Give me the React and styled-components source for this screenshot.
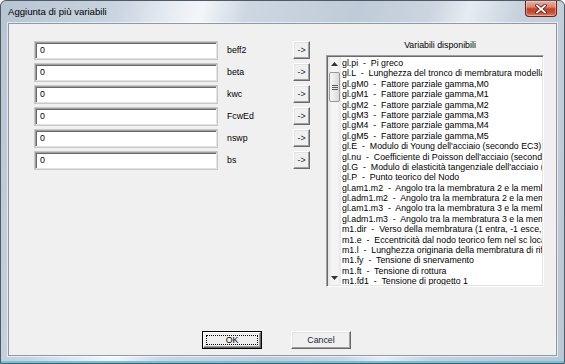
import React from "react";
import styled, { createGlobalStyle } from "styled-components";

const GlobalStyle = createGlobalStyle`
    html, body {
        margin: 0;
        padding: 0;
        overflow: hidden;
        background: #ffffff;
    }
    * {
        box-sizing: border-box;
    }
`

const Window = styled.div`
    width: 565px;
    height: 364px;
    display: flex;
    flex-direction: column;
    padding: 0 7px 7px 7px;
    border: 1px solid #4f5a66;
    border-radius: 6px 6px 0 0;
    background: linear-gradient(104deg, #b7c4d2 0%, #c9d4e0 18%, #e9eef4 27%, #f3f6f9 31%, #cdd7e2 38%, #bfcbd8 55%, #cbd5e0 66%, #e6ecf2 72%, #c6d1dc 80%, #bac7d4 100%);
    box-shadow: inset 0 -2px 0 #6fc3dc;
    font-family: "Liberation Sans", Arial, sans-serif;
`

const TitleBar = styled.div`
    height: 22px;
    flex: none;
    display: flex;
    flex-direction: row;
    justify-content: space-between;
    align-items: flex-start;
`

const Title = styled.div`
    padding-top: 5px;
    font-size: 9.6px;
    line-height: 12px;
    color: #000000;
`

const CloseButton = styled.div`
    width: 32px;
    height: 16px;
    display: flex;
    justify-content: center;
    align-items: center;
    border: 1px solid #6d2418;
    border-top: none;
    border-radius: 0 0 4px 4px;
    background: linear-gradient(180deg, #eab0a3 0%, #dc8574 40%, #c4432b 52%, #c84a33 75%, #de806a 100%);
    box-shadow: inset 0 0 0 1px rgba(255, 220, 210, 0.45);
`

const Client = styled.div`
    flex: 1;
    display: flex;
    flex-direction: column;
    padding: 14px 0 6px 0;
    background: #f0f0f0;
    border: 1px solid #8e99a6;
    box-shadow: 0 0 0 1px rgba(255, 255, 255, 0.6);
`

const Main = styled.div`
    display: flex;
    flex-direction: row;
    align-items: flex-start;
    padding-left: 26px;
`

const LeftColumn = styled.div`
    width: 275px;
    display: flex;
    flex-direction: column;
    gap: 4px;
    padding-top: 3px;
`

const Row = styled.div`
    height: 18px;
    display: flex;
    flex-direction: row;
    align-items: center;
`

const TextBox = styled.div`
    width: 182px;
    height: 17px;
    padding: 0 4px;
    display: flex;
    align-items: center;
    background: #ffffff;
    border: 1px solid;
    border-color: #a0a0a0 #e3e3e3 #e3e3e3 #a0a0a0;
    box-shadow: inset 1px 1px 0 #696969, 0 0 0 1px #c8c8c8;
    font-size: 8.8px;
    color: #000000;
`

const VarLabel = styled.div`
    width: 76px;
    padding-left: 10px;
    font-size: 8.8px;
    color: #000000;
`

const RaisedButton = styled.div`
    width: ${(p) => p.$w}px;
    height: 18px;
    display: flex;
    justify-content: center;
    align-items: center;
    background: #f0f0f0;
    border: 1px solid;
    border-color: #ffffff #696969 #696969 #ffffff;
    box-shadow: inset -1px -1px 0 #a0a0a0, inset 1px 1px 0 #e3e3e3;
    font-size: 8.8px;
    color: #1c1c30;
`

const DefaultButton = styled.div`
    width: 60px;
    height: 18px;
    border: 1px solid #000000;
`

const DefaultInner = styled.div`
    height: 100%;
    display: flex;
    justify-content: center;
    align-items: center;
    padding: 2px;
    background: #f0f0f0;
    border: 1px solid;
    border-color: #ffffff #696969 #696969 #ffffff;
    box-shadow: inset -1px -1px 0 #a0a0a0;
`

const FocusRect = styled.div`
    width: 100%;
    height: 100%;
    display: flex;
    justify-content: center;
    align-items: center;
    border: 1px dotted #000000;
    font-size: 8.8px;
    color: #000000;
`

const RightColumn = styled.div`
    display: flex;
    flex-direction: column;
    margin-left: 16px;
`

const ListTitle = styled.div`
    height: 14px;
    margin-bottom: 3px;
    padding-left: 10px;
    text-align: center;
    font-size: 8.8px;
    line-height: 14px;
    color: #000000;
`

const ListBox = styled.div`
    width: 218px;
    height: 232px;
    display: flex;
    flex-direction: row;
    background: #ffffff;
    border: 1px solid;
    border-color: #a0a0a0 #ffffff #ffffff #a0a0a0;
    box-shadow: inset 1px 1px 0 #696969, inset -1px -1px 0 #e3e3e3;
    padding: 1px;
    overflow: hidden;
`

const ScrollBar = styled.div`
    width: 13px;
    flex: none;
    display: flex;
    flex-direction: column;
    background: linear-gradient(90deg, #e4e4e4 0%, #f4f4f4 30%, #f4f4f4 70%, #e8e8e8 100%);
`

const ArrowBox = styled.div`
    height: 14px;
    display: flex;
    justify-content: center;
    align-items: center;
`

const Thumb = styled.div`
    height: 30px;
    margin: 1px 1px 0 1px;
    display: flex;
    flex-direction: column;
    justify-content: center;
    align-items: center;
    gap: 1px;
    border: 1px solid #979797;
    border-radius: 2px;
    background: linear-gradient(90deg, #f5f5f5 0%, #e9e9e9 50%, #d9d9d9 100%);
`

const Grip = styled.div`
    width: 6px;
    height: 1px;
    background: #5a5a5a;
`

const Track = styled.div`
    flex: 1;
`

const Items = styled.div`
    flex: 1;
    overflow: hidden;
    padding-top: 1px;
    padding-left: 1px;
`

const Item = styled.div`
    height: 10.4px;
    line-height: 10.4px;
    font-size: 8.8px;
    white-space: pre;
    color: #000000;
`

const Footer = styled.div`
    margin-top: auto;
    display: flex;
    flex-direction: row;
    gap: 29px;
    padding-left: 193px;
`

const variables = ["beff2", "beta", "kwc", "FcwEd", "nswp", "bs"];

const items = [
    "gl.pi  -  Pi greco",
    "gl.L  -  Lunghezza del tronco di membratura modellato",
    "gl.gM0  -  Fattore parziale gamma,M0",
    "gl.gM1  -  Fattore parziale gamma,M1",
    "gl.gM2  -  Fattore parziale gamma,M2",
    "gl.gM3  -  Fattore parziale gamma,M3",
    "gl.gM4  -  Fattore parziale gamma,M4",
    "gl.gM5  -  Fattore parziale gamma,M5",
    "gl.E  -  Modulo di Young dell'acciaio (secondo EC3)",
    "gl.nu  -  Coefficiente di Poisson dell'acciaio (secondo EC3)",
    "gl.G  -  Modulo di elasticità tangenziale dell'acciaio (secondo EC3)",
    "gl.P  -  Punto teorico del Nodo",
    "gl.am1.m2  -  Angolo tra la membratura 2 e la membratura 1",
    "gl.adm1.m2  -  Angolo tra la membratura 2 e la membratura 1",
    "gl.am1.m3  -  Angolo tra la membratura 3 e la membratura 1",
    "gl.adm1.m3  -  Angolo tra la membratura 3 e la membratura 1",
    "m1.dir  -  Verso della membratura (1 entra, -1 esce, rispetto al nodo)",
    "m1.e  -  Eccentricità dal nodo teorico fem nel sc locale",
    "m1.l  -  Lunghezza originaria della membratura di riferimento",
    "m1.fy  -  Tensione di snervamento",
    "m1.ft  -  Tensione di rottura",
    "m1.fd1  -  Tensione di progetto 1",
];

const CloseIcon = () => (
    <svg width="12" height="10" viewBox="0 0 12 10">
        <path d="M2 1.5 L10 8.5 M10 1.5 L2 8.5" stroke="#5a1a10" strokeWidth="3.4" strokeLinecap="square" />
        <path d="M2 1.5 L10 8.5 M10 1.5 L2 8.5" stroke="#ffffff" strokeWidth="1.8" strokeLinecap="square" />
    </svg>
);

const Arrow = ({ down }) => (
    <svg width="7" height="4" viewBox="0 0 7 4">
        <path d={down ? "M0 0 L7 0 L3.5 4 Z" : "M0 4 L7 4 L3.5 0 Z"} fill="#333333" />
    </svg>
);

const App = () => {
    return (
        <>
            <GlobalStyle />
            <Window>
                <TitleBar>
                    <Title>Aggiunta di più variabili</Title>
                    <CloseButton>
                        <CloseIcon />
                    </CloseButton>
                </TitleBar>
                <Client>
                    <Main>
                        <LeftColumn>
                            {variables.map((v) => (
                                <Row key={v}>
                                    <TextBox>0</TextBox>
                                    <VarLabel>{v}</VarLabel>
                                    <RaisedButton $w={17}>-&gt;</RaisedButton>
                                </Row>
                            ))}
                        </LeftColumn>
                        <RightColumn>
                            <ListTitle>Variabili disponibili</ListTitle>
                            <ListBox>
                                <ScrollBar>
                                    <ArrowBox>
                                        <Arrow />
                                    </ArrowBox>
                                    <Thumb>
                                        <Grip />
                                        <Grip />
                                        <Grip />
                                    </Thumb>
                                    <Track />
                                    <ArrowBox>
                                        <Arrow down />
                                    </ArrowBox>
                                </ScrollBar>
                                <Items>
                                    {items.map((it) => (
                                        <Item key={it}>{it}</Item>
                                    ))}
                                </Items>
                            </ListBox>
                        </RightColumn>
                    </Main>
                    <Footer>
                        <DefaultButton>
                            <DefaultInner>
                                <FocusRect>OK</FocusRect>
                            </DefaultInner>
                        </DefaultButton>
                        <RaisedButton $w={60}>Cancel</RaisedButton>
                    </Footer>
                </Client>
            </Window>
        </>
    );
}

export default App;
